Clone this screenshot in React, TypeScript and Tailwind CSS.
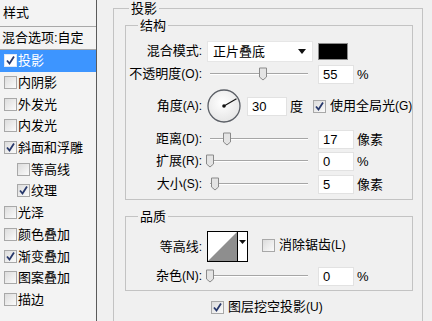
import React from 'react';

const FONT = { fontFamily: '"Liberation Sans", "Noto Sans CJK SC", sans-serif' };

// latin parts of labels like "(O):" are a bit smaller in the dialog
function T({ s }: { s: string }) {
  const parts = s.split(/([\x20-\x7e]+)/).filter(Boolean);
  return (
    <>
      {parts.map((p, i) =>
        /^[\x20-\x7e]+$/.test(p) ? (
          <span key={i} className="text-[12px]">{p}</span>
        ) : (
          <span key={i}>{p}</span>
        )
      )}
    </>
  );
}

function Check({ on, className = '' }: { on?: boolean; className?: string }) {
  return (
    <span className={`flex items-center justify-center w-[13px] h-[13px] border border-[#a8a8a8] bg-gradient-to-br from-[#dcdcdc] to-[#fbfbfb] shrink-0 ${className}`}>
      {on && (
        <svg width="11" height="11" viewBox="0 0 11 11">
          <path d="M2 5.5 L4.5 8.5 L9 1.5" fill="none" stroke="#27386b" strokeWidth="1.8" />
        </svg>
      )}
    </span>
  );
}

function Slider({ pos }: { pos: number }) {
  return (
    <div className="relative w-[101px] h-[22px] shrink-0">
      <div className="absolute left-[3px] right-0 top-[10px] h-[1px] bg-[#a6a6a6]" />
      <div className="absolute left-[3px] right-0 top-[11px] h-[1px] bg-white" />
      <svg className="absolute top-[4px]" style={{ left: pos - 5 }} width="10" height="14" viewBox="0 0 10 14">
        <path d="M1.5 1 H8.5 V10 L5 13 L1.5 10 Z" fill="#e4e4e4" stroke="#8a8a8a" strokeWidth="1" />
      </svg>
    </div>
  );
}

function Field({ value, w = 'w-[36px]' }: { value: string; w?: string }) {
  return (
    <div className={`${w} h-[19px] bg-white border border-[#e2e2e2] pl-[4px] text-[13px] leading-[17px] shrink-0`}>{value}</div>
  );
}

function Label({ text }: { text: string }) {
  return (
    <div className="w-[76px] text-right text-[13px] leading-[17px] shrink-0 whitespace-nowrap">
      <T s={text} />
    </div>
  );
}

function SliderRow({ label, pos, value, unit, cls }: { label: string; pos: number; value: string; unit: string; cls: string }) {
  return (
    <div className={`flex items-center h-[22px] ${cls}`}>
      <Label text={label} />
      <div className="ml-[5px]"><Slider pos={pos} /></div>
      <div className="ml-[10px]"><Field value={value} /></div>
      <span className="ml-[3px] text-[13px] leading-[17px]">{unit}</span>
    </div>
  );
}

const items: { name: string; checked: boolean; indent?: boolean; selected?: boolean }[] = [
  { name: '投影', checked: true, selected: true },
  { name: '内阴影', checked: false },
  { name: '外发光', checked: false },
  { name: '内发光', checked: false },
  { name: '斜面和浮雕', checked: true },
  { name: '等高线', checked: false, indent: true },
  { name: '纹理', checked: true, indent: true },
  { name: '光泽', checked: false },
  { name: '颜色叠加', checked: false },
  { name: '渐变叠加', checked: true },
  { name: '图案叠加', checked: false },
  { name: '描边', checked: false },
];

export default function App() {
  return (
    <div className="w-[432px] h-[321px] bg-[#f0f0f0] flex overflow-hidden text-black" style={FONT}>
      {/* style list */}
      <div className="w-[97px] h-full border-r border-[#5a5a5a] bg-[#f3f3f3] shrink-0 flex flex-col">
        <div className="h-[27px] border-b border-[#a8a8a8] flex items-center pl-[3px] text-[13px]">样式</div>
        <div className="h-[23px] border-b border-[#a8a8a8] flex items-center pl-[2px] text-[13px] whitespace-nowrap">混合选项:自定</div>
        {items.map((it) => (
          <div
            key={it.name}
            className={`h-[21.7px] flex items-center text-[13px] ${it.indent ? 'pl-[17px]' : 'pl-[4px]'} ${it.selected ? 'bg-[#3d95ff] text-white' : ''}`}
          >
            <Check on={it.checked} className={it.selected ? 'bg-white from-white to-white border-[#dfe8f5]' : ''} />
            <span className="ml-[1px] leading-[17px]">{it.name}</span>
          </div>
        ))}
      </div>

      {/* settings */}
      <div className="flex-1 pl-[16px] pr-[9px]">
        <div className="relative mt-[8px] border border-[#c3c3c3] pl-[11px] pr-[9px] pt-[16px] h-[330px]">
          <span className="absolute left-[15px] top-[-9px] px-[2px] bg-[#f0f0f0] text-[13px] leading-[17px]">投影</span>

          {/* 结构 */}
          <div className="relative border border-[#c3c3c3] pt-[14px] pb-[4px]">
            <span className="absolute left-[12px] top-[-9px] px-[2px] bg-[#f0f0f0] text-[13px] leading-[17px]">结构</span>

            <div className="flex items-center h-[22px]">
              <Label text="混合模式:" />
              <div className="ml-[5px] w-[106px] h-[21px] bg-white border border-[#e6e6e6] flex items-center justify-between pl-[5px] pr-[6px] text-[13px]">
                <span className="leading-[17px]">正片叠底</span>
                <svg width="8" height="5" viewBox="0 0 8 5"><path d="M0 0 H8 L4 5 Z" fill="#111" /></svg>
              </div>
              <div className="ml-[5px] w-[30px] h-[17px] bg-black border border-[#8c8c8c]" />
            </div>

            <SliderRow label="不透明度(O):" pos={56} value="55" unit="%" cls="mt-[1px]" />

            <div className="flex items-center h-[34px] mt-[4px]">
              <Label text="角度(A):" />
              <svg className="ml-[5px] shrink-0" width="34" height="34" viewBox="0 0 34 34">
                <defs>
                  <radialGradient id="dial" cx="0.45" cy="0.4" r="0.6">
                    <stop offset="0" stopColor="#ffffff" />
                    <stop offset="1" stopColor="#e6e6e6" />
                  </radialGradient>
                </defs>
                <circle cx="17" cy="17" r="16" fill="url(#dial)" stroke="#5b5f66" strokeWidth="1.3" />
                <line x1="17" y1="17" x2="29.5" y2="9.8" stroke="#111" strokeWidth="1.2" />
                <circle cx="17" cy="17" r="1.8" fill="#111" />
              </svg>
              <div className="ml-[6px]"><Field value="30" w="w-[40px]" /></div>
              <span className="ml-[3px] text-[13px] leading-[17px]">度</span>
              <Check on className="ml-[10px]" />
              <span className="ml-[4px] text-[13px] leading-[17px] whitespace-nowrap"><T s="使用全局光(G)" /></span>
            </div>

            <SliderRow label="距离(D):" pos={20} value="17" unit="像素" cls="mt-[5px]" />
            <SliderRow label="扩展(R):" pos={3} value="0" unit="%" cls="" />
            <SliderRow label="大小(S):" pos={8} value="5" unit="像素" cls="mt-[1px]" />
          </div>

          {/* 品质 */}
          <div className="relative border border-[#c3c3c3] mt-[16px] pt-[14px] pb-[3px]">
            <span className="absolute left-[12px] top-[-9px] px-[2px] bg-[#f0f0f0] text-[13px] leading-[17px]">品质</span>
            <div className="flex items-center h-[31px]">
              <Label text="等高线:" />
              <div className="ml-[5px] w-[41px] h-[31px] border border-black bg-white flex shrink-0">
                <svg width="29" height="29" viewBox="0 0 29 29">
                  <path d="M0 29 L29 0 L29 29 Z" fill="#8e8e8e" />
                </svg>
                <div className="flex-1 border-l border-black flex justify-center pt-[8px]">
                  <svg width="7" height="4" viewBox="0 0 7 4"><path d="M0 0 H7 L3.5 4 Z" fill="#111" /></svg>
                </div>
              </div>
              <Check className="ml-[14px] mb-[3px]" />
              <span className="ml-[4px] mb-[3px] text-[13px] leading-[17px] whitespace-nowrap"><T s="消除锯齿(L)" /></span>
            </div>
            <SliderRow label="杂色(N):" pos={3} value="0" unit="%" cls="mt-[3px]" />
          </div>

          <div className="flex items-center h-[18px] mt-[7px] pl-[86px]">
            <Check on />
            <span className="ml-[4px] text-[13px] leading-[17px] whitespace-nowrap"><T s="图层挖空投影(U)" /></span>
          </div>
        </div>
      </div>
    </div>
  );
}
